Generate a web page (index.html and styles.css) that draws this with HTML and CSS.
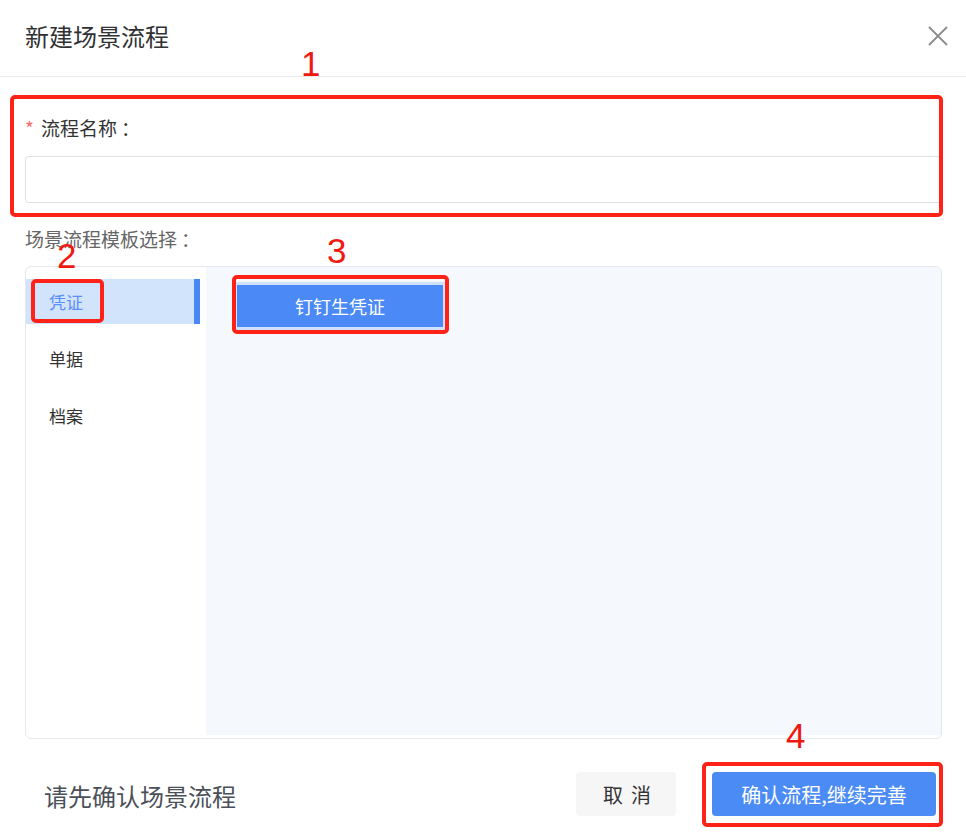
FILE: index.html
```html
<!DOCTYPE html>
<html lang="zh-CN">
<head>
  <meta charset="UTF-8">
  <meta name="viewport" content="width=device-width, initial-scale=1.0">
  <title>新建场景流程</title>
  <link rel="stylesheet" href="styles.css">
</head>
<body>
  <div class="dialog">
    <header class="dialog-head">
      <h2 class="dialog-title">新建场景流程</h2>
      <button class="close-btn" aria-label="关闭">
        <svg width="20" height="20" viewBox="0 0 20 20">
          <path d="M1 1 L19 19 M19 1 L1 19" stroke="#8c8c8c" stroke-width="1.8" fill="none"/>
        </svg>
      </button>
    </header>

    <div class="dialog-body">
      <div class="field">
        <label class="field-label" for="flowName"><span class="req">*</span>流程名称<span class="colon">：</span></label>
        <input type="text" id="flowName" class="text-input">
      </div>

      <div class="section-label">场景流程模板选择<span class="colon">：</span></div>

      <div class="picker">
        <ul class="picker-menu">
          <li class="active">凭证</li>
          <li>单据</li>
          <li>档案</li>
        </ul>
        <div class="picker-pane">
          <div class="tpl-card">
            <button class="tpl-btn">钉钉生凭证</button>
          </div>
        </div>
      </div>
    </div>

    <footer class="dialog-foot">
      <span class="hint">请先确认场景流程</span>
      <div class="actions">
        <button class="btn btn-cancel">取消</button>
        <button class="btn btn-primary">确认流程,继续完善</button>
      </div>
    </footer>

    <!-- step markers drawn over the form -->
    <div class="mark mark-1"></div>
    <div class="mark mark-2"></div>
    <div class="mark mark-3"></div>
    <div class="mark mark-4"></div>
    <span class="step step-1">1</span>
    <span class="step step-2">2</span>
    <span class="step step-3">3</span>
    <span class="step step-4">4</span>
  </div>
</body>
</html>
```

FILE: styles.css
```css
body {
  margin: 0;
  background: #fff;
  font-family: "Noto Sans CJK SC", "Microsoft YaHei", sans-serif;
  color: #333;
}

.dialog {
  position: relative;
  width: 966px;
  height: 832px;
  background: #fff;
}

.dialog-head {
  height: 77px;
  box-sizing: border-box;
  display: flex;
  align-items: center;
  justify-content: space-between;
  padding: 0 18px 5px 25px;
  border-bottom: 1px solid #ebebeb;
}

.dialog-title {
  margin: 0;
  font-size: 24px;
  font-weight: 400;
  line-height: 30px;
  color: #303133;
}

.close-btn {
  background: none;
  border: none;
  padding: 0;
  width: 20px;
  height: 20px;
  cursor: pointer;
}

.dialog-body {
  padding: 39px 24px 0 25px;
}

.field-label {
  display: block;
  font-size: 19px;
  line-height: 24px;
  color: #333;
}

.colon {
  margin-left: 4px;
}

.req {
  color: #f56c6c;
  margin-right: 7px;
}

.text-input {
  display: block;
  box-sizing: border-box;
  width: 100%;
  height: 47px;
  margin-top: 16px;
  border: 1px solid #dcdfe6;
  border-radius: 4px;
  background: #fff;
}

.section-label {
  margin-top: 24px;
  font-size: 19px;
  line-height: 24px;
  color: #666;
}

.picker {
  margin-top: 15px;
  height: 473px;
  box-sizing: border-box;
  display: flex;
  border: 1px solid #e4e7ed;
  border-radius: 6px;
  overflow: hidden;
}

.picker-menu {
  list-style: none;
  margin: 0;
  padding: 12px 6px 0 0;
  width: 180px;
  box-sizing: border-box;
  display: flex;
  flex-direction: column;
  gap: 12px;
}

.picker-menu li {
  height: 45px;
  line-height: 45px;
  padding-left: 23px;
  font-size: 17px;
  color: #333;
  cursor: pointer;
}

.picker-menu li.active {
  background: #d2e3fc;
  color: #5b8ff9;
  border-right: 6px solid #4a89f5;
}

.picker-pane {
  flex: 1;
  background: #f5f8fc;
  margin-bottom: 3px;
  padding: 15px 0 0 28px;
}

.tpl-card {
  display: inline-block;
  padding: 3px;
  background: #d0e1fb;
}

.tpl-btn {
  display: block;
  width: 206px;
  height: 42px;
  border: none;
  background: #4a89f6;
  color: #fff;
  font-family: inherit;
  font-size: 18px;
  cursor: pointer;
}

.dialog-foot {
  margin-top: 33px;
  display: flex;
  align-items: center;
  justify-content: space-between;
  padding: 0 30px 0 44px;
}

.hint {
  font-size: 24px;
  line-height: 30px;
  color: #4b4f58;
  margin-top: 3px;
}

.actions {
  display: flex;
  gap: 36px;
}

.btn {
  height: 44px;
  border: none;
  border-radius: 4px;
  font-family: inherit;
  font-size: 20px;
  cursor: pointer;
}

.btn-cancel {
  width: 100px;
  background: #f6f6f6;
  color: #333;
  letter-spacing: 8px;
  text-indent: 10px;
}

.btn-primary {
  width: 224px;
  background: #4b8bf5;
  color: #fff;
}

/* red outline markers */
.mark {
  position: absolute;
  box-sizing: border-box;
  border: 4px solid #fe2217;
  border-radius: 5px;
}

.mark-1 { left: 10px; top: 95px; width: 933px; height: 122px; }
.mark-2 { left: 31px; top: 279px; width: 73px; height: 44px; }
.mark-3 { left: 232px; top: 275px; width: 217px; height: 59px; }
.mark-4 { left: 702px; top: 762px; width: 241px; height: 65px; }

.step {
  position: absolute;
  font-family: "Liberation Sans", Arial, sans-serif;
  font-size: 35px;
  line-height: 1;
  color: #f0190f;
}

.step-1 { left: 301px; top: 46px; }
.step-2 { left: 57px; top: 238px; }
.step-3 { left: 327px; top: 233px; }
.step-4 { left: 786px; top: 718px; }
```
